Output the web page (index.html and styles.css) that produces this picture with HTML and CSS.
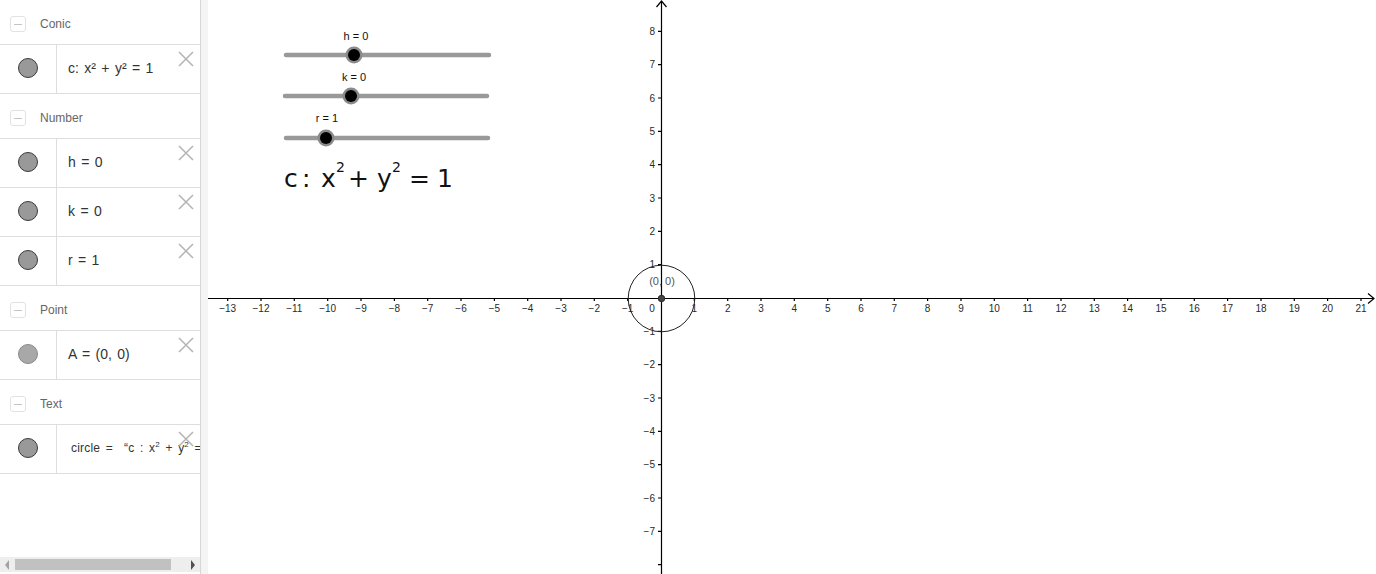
FILE: index.html
```html
<!DOCTYPE html>
<html>
<head>
<meta charset="utf-8">
<title>GeoGebra</title>
<link rel="stylesheet" href="styles.css">
</head>
<body>
<div class="app">
  <aside class="algebra">
    <div class="list">
      <div class="group-head"><span class="toggle"></span><span class="gname">Conic</span></div>
      <div class="item">
        <div class="marker-cell"><span class="marker"></span></div>
        <div class="formula">c: x² + y² = 1</div>
        <svg class="del" viewBox="0 0 16 16"><path d="M1 1L15 15M15 1L1 15"/></svg>
      </div>
      <div class="group-head"><span class="toggle"></span><span class="gname">Number</span></div>
      <div class="item">
        <div class="marker-cell"><span class="marker"></span></div>
        <div class="formula">h = 0</div>
        <svg class="del" viewBox="0 0 16 16"><path d="M1 1L15 15M15 1L1 15"/></svg>
      </div>
      <div class="item">
        <div class="marker-cell"><span class="marker"></span></div>
        <div class="formula">k = 0</div>
        <svg class="del" viewBox="0 0 16 16"><path d="M1 1L15 15M15 1L1 15"/></svg>
      </div>
      <div class="item">
        <div class="marker-cell"><span class="marker"></span></div>
        <div class="formula">r = 1</div>
        <svg class="del" viewBox="0 0 16 16"><path d="M1 1L15 15M15 1L1 15"/></svg>
      </div>
      <div class="group-head"><span class="toggle"></span><span class="gname">Point</span></div>
      <div class="item">
        <div class="marker-cell"><span class="marker light"></span></div>
        <div class="formula">A = (0, 0)</div>
        <svg class="del" viewBox="0 0 16 16"><path d="M1 1L15 15M15 1L1 15"/></svg>
      </div>
      <div class="group-head"><span class="toggle"></span><span class="gname">Text</span></div>
      <div class="item">
        <div class="marker-cell"><span class="marker"></span></div>
        <div class="formula small">circle = &nbsp;“c : x<sup>2</sup> + y<sup>2</sup> = 1”</div>
        <svg class="del" viewBox="0 0 16 16"><path d="M1 1L15 15M15 1L1 15"/></svg>
      </div>
    </div>
    <div class="hscroll">
      <span class="arr-left"></span>
      <span class="thumb"></span>
      <span class="arr-right"></span>
    </div>
  </aside>
  <div class="splitter"></div>
  <main class="graphics">
    <svg class="canvas" width="1168" height="574" viewBox="208 0 1168 574">
      <!-- sliders -->
      <g class="slider">
        <line x1="286" y1="55" x2="489" y2="55" class="track"/>
        <circle cx="354" cy="55" r="8.5" class="ring"/>
        <circle cx="354" cy="55" r="6" class="knob"/>
        <text x="356" y="40" class="slabel">h = 0</text>
      </g>
      <g class="slider">
        <line x1="285" y1="96" x2="487" y2="96" class="track"/>
        <circle cx="351" cy="96" r="8.5" class="ring"/>
        <circle cx="351" cy="96" r="6" class="knob"/>
        <text x="354" y="81" class="slabel">k = 0</text>
      </g>
      <g class="slider">
        <line x1="286" y1="138" x2="488" y2="138" class="track"/>
        <circle cx="326" cy="138" r="8.5" class="ring"/>
        <circle cx="326" cy="138" r="6" class="knob"/>
        <text x="327" y="122" class="slabel">r = 1</text>
      </g>
      <!-- big formula text -->
      <text class="bigf" y="187"><tspan x="284">c</tspan><tspan x="302">:</tspan><tspan x="321">x</tspan><tspan x="336" y="172" class="sup">2</tspan><tspan x="348" y="187">+</tspan><tspan x="377">y</tspan><tspan x="392" y="172" class="sup">2</tspan><tspan x="409" y="187">=</tspan><tspan x="437">1</tspan></text>

      <!-- axes -->
      <path class="axis" d="M208 298.5H1374M1368 293.5L1374 298.5L1368 303.5M661.5 574V1M656.5 7L661.5 1L666.5 7"/>
      <path class="axis" d="M227.7 298v3M261 298v3M294.3 298v3M327.7 298v3M361 298v3M394.4 298v3M427.7 298v3M461 298v3M494.4 298v3M527.7 298v3M561 298v3M594.3 298v3M627.7 298v3M694.3 298v3M727.7 298v3M761 298v3M794.3 298v3M827.7 298v3M861 298v3M894.3 298v3M927.6 298v3M961 298v3M994.3 298v3M1027.6 298v3M1061 298v3M1094.3 298v3M1127.6 298v3M1161 298v3M1194.3 298v3M1227.6 298v3M1261 298v3M1294.3 298v3M1327.6 298v3M1361 298v3M658 31.4h3M658 64.7h3M658 98h3M658 131.4h3M658 164.7h3M658 198h3M658 231.3h3M658 264.7h3M658 331.3h3M658 364.7h3M658 398h3M658 431.3h3M658 464.7h3M658 498h3M658 531.3h3M658 564.6h3"/>
      <g class="xl">
        <text x="227.7" y="312">−13</text><text x="261" y="312">−12</text><text x="294.3" y="312">−11</text><text x="327.7" y="312">−10</text>
        <text x="361" y="312">−9</text><text x="394.4" y="312">−8</text><text x="427.7" y="312">−7</text><text x="461" y="312">−6</text>
        <text x="494.4" y="312">−5</text><text x="527.7" y="312">−4</text><text x="561" y="312">−3</text><text x="594.3" y="312">−2</text>
        <text x="627.7" y="312">−1</text><text x="652" y="312">0</text>
        <text x="694.3" y="312">1</text><text x="727.7" y="312">2</text><text x="761" y="312">3</text><text x="794.3" y="312">4</text>
        <text x="827.7" y="312">5</text><text x="861" y="312">6</text><text x="894.3" y="312">7</text><text x="927.6" y="312">8</text>
        <text x="961" y="312">9</text><text x="994.3" y="312">10</text><text x="1027.6" y="312">11</text><text x="1061" y="312">12</text>
        <text x="1094.3" y="312">13</text><text x="1127.6" y="312">14</text><text x="1161" y="312">15</text><text x="1194.3" y="312">16</text>
        <text x="1227.6" y="312">17</text><text x="1261" y="312">18</text><text x="1294.3" y="312">19</text><text x="1327.6" y="312">20</text>
        <text x="1361" y="312">21</text>
      </g>
      <g class="yl">
        <text x="655" y="35">8</text><text x="655" y="68.2">7</text><text x="655" y="101.5">6</text><text x="655" y="134.9">5</text>
        <text x="655" y="168.2">4</text><text x="655" y="201.5">3</text><text x="655" y="234.8">2</text><text x="655" y="268.2">1</text>
        <text x="655" y="334.8">−1</text><text x="655" y="368.2">−2</text><text x="655" y="401.5">−3</text><text x="655" y="434.8">−4</text>
        <text x="655" y="468.2">−5</text><text x="655" y="501.5">−6</text><text x="655" y="534.8">−7</text>
      </g>

      <!-- circle c and point A -->
      <circle cx="661.5" cy="298.5" r="33.3" class="conic"/>
      <circle cx="661.5" cy="298.5" r="3.3" class="pt"/>
      <text x="662" y="285" class="ptlabel">(0, 0)</text>
    </svg>
  </main>
</div>
</body>
</html>
```

FILE: styles.css
```css
html, body {
  margin: 0;
  padding: 0;
  height: 100%;
  background: #fff;
  overflow: hidden;
}

body {
  font-family: "Liberation Sans", Arial, sans-serif;
}

.app {
  display: flex;
  width: 1376px;
  height: 574px;
}

/* ---------- algebra view ---------- */
.algebra {
  width: 200px;
  flex: none;
  display: flex;
  flex-direction: column;
  background: #fff;
}

.list {
  flex: 1;
  overflow: hidden;
}

.group-head {
  box-sizing: content-box;
  height: 41px;
  padding: 3px 0 0 10px;
  border-bottom: 1px solid #dedede;
  display: flex;
  align-items: center;
}

.toggle {
  width: 14px;
  height: 14px;
  border: 1px solid #e2e2e2;
  border-radius: 3px;
  position: relative;
  flex: none;
}

.toggle::after {
  content: "";
  position: absolute;
  left: 3px;
  right: 3px;
  top: 7px;
  height: 1px;
  background: #c4c4c4;
}

.gname {
  margin-left: 14px;
  font-size: 12px;
  color: #666;
}

.item {
  height: 48px;
  border-bottom: 1px solid #dedede;
  display: flex;
  position: relative;
}

.marker-cell {
  width: 56px;
  border-right: 1px solid #dedede;
  display: flex;
  align-items: center;
  justify-content: center;
  flex: none;
}

.marker {
  width: 18px;
  height: 18px;
  margin-bottom: 3px;
  border-radius: 50%;
  background: #999;
  border: 1px solid #3a3a3a;
}

.marker.light {
  background: #a8a8a8;
  border-color: #8a8a8a;
}

.formula {
  align-self: center;
  margin-bottom: 3px;
  padding-left: 11px;
  font-size: 14px;
  color: #333;
  white-space: nowrap;
  word-spacing: 1.5px;
}

.formula.small {
  font-size: 12px;
  padding-left: 14px;
  word-spacing: 2px;
  letter-spacing: 0.2px;
}

.formula sup {
  font-size: 8px;
  line-height: 0;
}

.del {
  position: absolute;
  right: 6px;
  top: 6px;
  width: 16px;
  height: 16px;
  stroke: #b4b4b4;
  stroke-width: 1.5;
  fill: none;
}

/* horizontal scrollbar */
.hscroll {
  height: 15px;
  margin-bottom: 2px;
  background: #eeeeee;
  display: flex;
  align-items: center;
}

.arr-left {
  width: 0;
  height: 0;
  border-top: 5px solid transparent;
  border-bottom: 5px solid transparent;
  border-right: 4px solid #a3a3a3;
  margin-left: 5px;
}

.thumb {
  width: 156px;
  height: 11px;
  background: #c1c1c1;
  margin-left: 6px;
}

.arr-right {
  width: 0;
  height: 0;
  border-top: 5px solid transparent;
  border-bottom: 5px solid transparent;
  border-left: 4px solid #505050;
  margin-left: 20px;
}

.splitter {
  width: 7px;
  flex: none;
  border-left: 1px solid #d6d6d6;
  background: #f4f4f4;
}

/* ---------- graphics view ---------- */
.graphics {
  flex: 1;
  position: relative;
  overflow: hidden;
}

.canvas {
  display: block;
}

.track {
  stroke: #999;
  stroke-width: 4.5;
  stroke-linecap: round;
}

.ring {
  fill: #8a8a8a;
}

.knob {
  fill: #000;
}

.slabel {
  font-family: "Liberation Sans", Arial, sans-serif;
  font-size: 11px;
  fill: #111;
  text-anchor: middle;
}

.bigf {
  font-family: "DejaVu Sans", "Liberation Sans", sans-serif;
  font-size: 25px;
  fill: #111;
}

.bigf .sup {
  font-size: 14px;
}

.axis {
  stroke: #000;
  stroke-width: 1.2;
  fill: none;
}

.xl text,
.yl text {
  font-family: "Liberation Sans", Arial, sans-serif;
  font-size: 10px;
  fill: #2a2a2a;
}

.xl text {
  text-anchor: middle;
}

.yl text {
  text-anchor: end;
}

.conic {
  fill: none;
  stroke: #222;
  stroke-width: 1;
}

.pt {
  fill: #444;
  stroke: #222;
  stroke-width: 0.8;
}

.ptlabel {
  font-family: "Liberation Sans", Arial, sans-serif;
  font-size: 11px;
  fill: #555;
  text-anchor: middle;
}
```
